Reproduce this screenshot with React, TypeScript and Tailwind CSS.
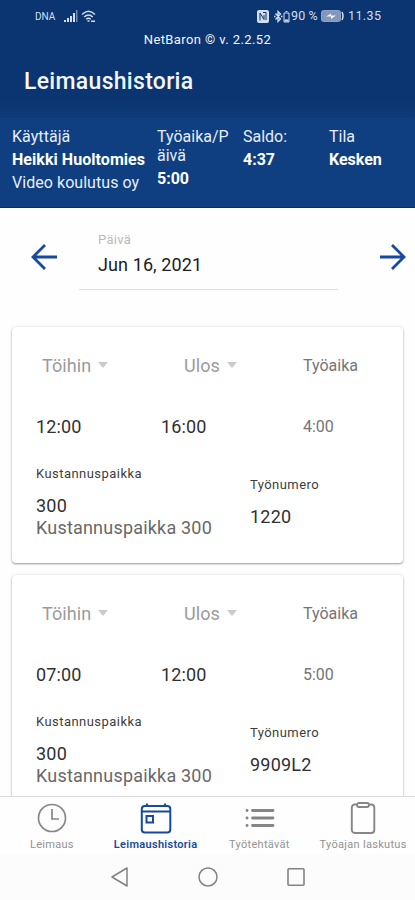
interface Entry {
  start: string;
  end: string;
  total: string;
  job: string;
}

const entries: Entry[] = [
  { start: "12:00", end: "16:00", total: "4:00", job: "1220" },
  { start: "07:00", end: "12:00", total: "5:00", job: "9909L2" },
];

const StatusBar = () => (
  <div className="flex h-8 items-center pl-[35px] pr-[33px] text-[12.5px] text-[#d3def0]">
    <span className="w-[29px] text-[10px]">DNA</span>
    <svg className="h-[13px] w-[14px]" viewBox="0 0 14 13" fill="currentColor">
      <path d="M0 10h2v2H0zM3 8h2v4H3zM6 6h2v6H6zM9 3h2v9H9z" />
      <path d="M12 0h1.500v12H12z" opacity=".5" />
    </svg>
    <svg className="ml-[3px] h-[13px] w-[15px]" viewBox="0 0 15 13" fill="none" stroke="currentColor" strokeWidth="1.500">
      <path d="M1 4.500Q7.500-2 14 4.500M3.200 7Q7.500 3 11.800 7M5.200 9.200Q7.500 7.200 9.800 9.200" />
      <path d="M6.500 11h2M10 11.300h4" />
    </svg>
    <svg className="ml-[161px] h-[13px] w-[12px]" viewBox="0 0 12 13">
      <rect width="12" height="13" rx="2" fill="currentColor" />
      <path d="M3 10.500V3l4 6.500M6 2.500h3v7.500M7 9.500V5" fill="none" stroke="#0a3570" strokeWidth="1" />
    </svg>
    <svg className="ml-[5px] h-[13px] w-[9px]" viewBox="0 0 9 13" fill="none" stroke="currentColor" strokeWidth="1.300">
      <path d="M1.500 3.500l5 5.500-2.500 2.500v-10l2.500 2.500-5 5.500M0 6.500h1.500M7 6.500h1.500" />
    </svg>
    <svg className="h-[13px] w-[7px]" viewBox="0 0 7 13" fill="none" stroke="currentColor">
      <path d="M1 3h5v9H1zM2.500 1.500h2" />
      <path d="M1.500 10.500h4" strokeWidth="2" />
    </svg>
    <span className="w-[31px] whitespace-nowrap pl-px text-[12.5px] tracking-[0.1px]">90 %</span>
    <svg className="h-[12px] w-[23px]" viewBox="0 0 23 12">
      <rect x=".5" y=".5" width="19" height="11" rx="2" fill="#8297bd" stroke="#8fa3c6" />
      <path d="M5 6.500l5-3v2h5l-5 3.500v-2.500z" fill="#f1f5ff" />
      <path d="M21 2q2 4 0 8" fill="none" stroke="currentColor" strokeWidth="1.500" />
    </svg>
    <span className="ml-[4px] whitespace-nowrap tracking-[0.4px]">11.35</span>
  </div>
);

const AppHeader = () => (
  <header className="h-[118px] bg-[#0a3570] bg-linear-to-b from-[#0a3570] from-85% to-[#0d3a78] text-[#f4f7ff]">
    <StatusBar />
    <p className="h-4 text-center text-[13px] leading-4 tracking-[0.4px]">NetBaron © v. 2.2.52</p>
    <h1 className="pl-[24px] pt-[19px] text-[23px] font-medium leading-[30px] tracking-[0.3px]">Leimaushistoria</h1>
  </header>
);

const UserSummary = () => (
  <section className="flex h-[90px] border-b border-[#08306c] bg-[#0f3f80] pl-3 pt-[7px] text-[16px] leading-[23px] text-[#e6eefb]">
    <div className="w-[145px] shrink-0 whitespace-nowrap tracking-[0.05px]">
      <p>Käyttäjä</p>
      <p className="font-bold text-white">Heikki Huoltomies</p>
      <p>Video koulutus oy</p>
    </div>
    <div className="w-[86px] shrink-0">
      <p className="pt-[2px] leading-[19px]">
        Työaika/P
        <br />
        äivä
      </p>
      <p className="pt-px font-bold leading-[26px] text-white">5:00</p>
    </div>
    <div className="w-[86px] shrink-0">
      <p>Saldo:</p>
      <p className="font-bold text-white">4:37</p>
    </div>
    <div>
      <p>Tila</p>
      <p className="font-bold text-white">Kesken</p>
    </div>
  </section>
);

const Arrow = ({ className }: { className?: string }) => (
  <svg
    className={className}
    width="26"
    height="26"
    viewBox="0 0 26 26"
    fill="none"
    stroke="#174a9c"
    strokeWidth="2.800"
  >
    <path d="M26 13H2M14 1L2 13l12 12" />
  </svg>
);

const DatePicker = () => (
  <section className="flex h-[118px] shrink-0 items-start pl-[31px] pr-[9px]">
    <Arrow className="mt-9 shrink-0" />
    <div className="ml-[22px] h-[82px] w-[259px] border-b border-[#dedede] pl-[19px] pt-[24px]">
      <p className="text-[13px] leading-4 tracking-[0.3px] text-[#b9b9b9]">Päivä</p>
      <p className="pt-[5px] text-[18px] leading-6 tracking-[0.1px] text-[#202020]">Jun 16, 2021</p>
    </div>
    <Arrow className="ml-auto mt-9 shrink-0 rotate-180" />
  </section>
);

const SortLabel = ({ children }: { children: string }) => (
  <span className="flex items-center gap-[7px] text-[18px] tracking-[0.1px] text-[#9b9b9b]">
    {children}
    <svg className="-mt-px" width="10" height="6" viewBox="0 0 10 6" fill="#c9c9c9">
      <path d="M0 0h10L5 6z" />
    </svg>
  </span>
);

const EntryCard = ({ entry }: { entry: Entry }) => (
  <article className="h-[236px] shrink-0 rounded-[4px] bg-white pl-[24px] shadow-[0_1px_2px_rgba(0,0,0,0.38),0_0_4px_rgba(0,0,0,0.08)]">
    <div className="flex h-[76px] items-center">
      <div className="w-[142px] pl-[6px]">
        <SortLabel>Töihin</SortLabel>
      </div>
      <div className="w-[125px] pl-[6px]">
        <SortLabel>Ulos</SortLabel>
      </div>
      <span className="pt-[2px] text-[16px] text-[#757575]">Työaika</span>
    </div>
    <div className="flex h-[46px] items-center text-[18px] tracking-[0.15px] text-[#303030]">
      <span className="w-[125px]">{entry.start}</span>
      <span className="w-[142px]">{entry.end}</span>
      <span className="pt-[2px] text-[16px] tracking-normal text-[#757575]">{entry.total}</span>
    </div>
    <div className="flex pt-[17px]">
      <div className="w-[214px] shrink-0 whitespace-nowrap">
        <p className="text-[13px] leading-4 tracking-[0.45px] text-[#3d3d3d]">Kustannuspaikka</p>
        <p className="pt-[13px] text-[18px] leading-[22px] tracking-[0.2px] text-[#303030]">300</p>
        <p className="text-[18px] leading-[22px] tracking-[0.2px] text-[#686868]">Kustannuspaikka 300</p>
      </div>
      <div className="pt-[11px]">
        <p className="text-[13px] leading-4 tracking-[0.45px] text-[#3d3d3d]">Työnumero</p>
        <p className="pt-[13px] text-[18px] leading-[22px] tracking-[0.2px] text-[#303030]">{entry.job}</p>
      </div>
    </div>
  </article>
);

const TabBar = () => (
  <nav className="grid h-[58px] shrink-0 grid-cols-4 border-t border-[#dcdcdc] bg-[#fefefe] text-center text-[11px] tracking-[0.3px] text-[#929292]">
    <div className="flex flex-col items-center pt-[5px]">
      <svg width="32" height="32" viewBox="0 0 32 32" fill="none" stroke="#878787" strokeWidth="1.700">
        <circle cx="16" cy="16" r="13.500" />
        <path d="M16 7v10h7" />
      </svg>
      <span className="mt-[3px]">Leimaus</span>
    </div>
    <div className="flex flex-col items-center pt-[5px] text-[#174a9c]">
      <svg width="32" height="32" viewBox="0 0 32 32" fill="none" stroke="currentColor" strokeWidth="2">
        <rect x="1.800" y="4" width="28.500" height="26.500" rx="3" />
        <path d="M2 9.500h28M7 1.500v3M25 1.500v3" />
        <rect x="6.500" y="14" width="6.500" height="6.500" />
      </svg>
      <span className="mt-[3px] font-semibold">Leimaushistoria</span>
    </div>
    <div className="flex flex-col items-center pt-[5px]">
      <svg width="32" height="32" viewBox="0 0 32 32" fill="none" stroke="#858585" strokeWidth="2.800" strokeLinecap="round">
        <path d="M9.500 8.500h20.500M9.500 16h20.500M9.500 23.500h20.500M4 8.500h.1M4 16h.1M4 23.500h.1" />
      </svg>
      <span className="mt-[3px]">Työtehtävät</span>
    </div>
    <div className="flex flex-col items-center whitespace-nowrap pt-[5px]">
      <svg width="32" height="32" viewBox="0 0 32 32" fill="none" stroke="#878787" strokeWidth="1.900">
        <rect x="4.800" y="2.500" width="22.500" height="28.500" rx="3" />
        <rect x="10" y="1" width="12" height="4" rx="2" fill="#fefefe" />
      </svg>
      <span className="mt-[3px]">Työajan laskutus</span>
    </div>
  </nav>
);

const SystemNav = () => (
  <div className="flex h-[46px] shrink-0 items-center justify-center gap-[68px] bg-[#fcfcfc]">
    <svg width="20" height="20" viewBox="0 0 20 20" fill="none" stroke="#828282" strokeWidth="1.500" strokeLinejoin="round">
      <path d="M17 1v18L2 10z" />
    </svg>
    <svg width="20" height="20" viewBox="0 0 20 20" fill="none" stroke="#828282" strokeWidth="1.500">
      <circle cx="10" cy="10" r="9" />
    </svg>
    <svg width="20" height="20" viewBox="0 0 20 20" fill="none" stroke="#828282" strokeWidth="1.600">
      <rect x="2" y="1.800" width="16" height="16.500" rx="1" />
    </svg>
  </div>
);

const App = () => (
  <div className="flex h-[900px] w-[415px] flex-col overflow-hidden bg-[#fefefe] font-[Roboto,sans-serif]">
    <AppHeader />
    <UserSummary />
    <main className="flex min-h-0 flex-1 flex-col overflow-hidden">
      <DatePicker />
      <div className="flex shrink-0 flex-col gap-[12px] px-[12px] pt-px">
        {entries.map((entry) => (
          <EntryCard key={entry.job} entry={entry} />
        ))}
      </div>
    </main>
    <TabBar />
    <SystemNav />
  </div>
);

export default App;
